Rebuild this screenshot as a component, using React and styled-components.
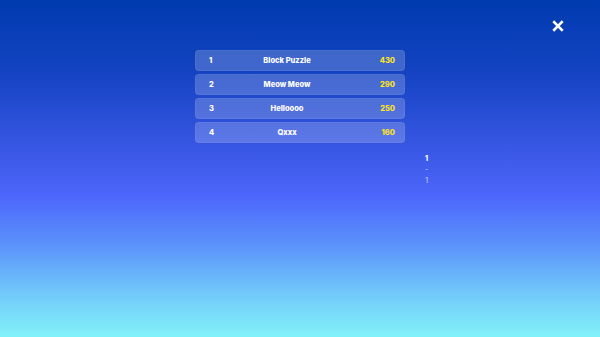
import React from "react";
import styled, { createGlobalStyle } from "styled-components";

const Global = createGlobalStyle`
  html, body { margin: 0; padding: 0; }
  body { font-family: Inter, "Noto Sans", sans-serif; }
  #root { width: 600px; height: 337px; }
`;

const Screen = styled.div`
  position: relative;
  width: 600px;
  height: 337px;
  overflow: hidden;
  background: linear-gradient(to bottom, #003bb0 0%, #1242c0 20%, #3a58e6 45%, #4c66fb 58%, #5a90fb 72%, #72ccf9 88%, #82f2f9 100%);
  display: flex;
  flex-direction: column;
  align-items: center;
  padding-top: 50px;
  box-sizing: border-box;
`;

const CloseButton = styled.button`
  position: absolute;
  top: 20px;
  right: 36px;
  width: 12px;
  height: 12px;
  padding: 0;
  border: none;
  background: none;
  cursor: pointer;
  display: flex;
`;

const Board = styled.div`
  position: relative;
  width: 210px;
  display: flex;
  flex-direction: column;
  gap: 3px;
`;

const Row = styled.div`
  display: grid;
  grid-template-columns: 20px 1fr 50px;
  align-items: center;
  height: 21px;
  padding: 0 10px 0 14px;
  box-sizing: border-box;
  border-radius: 4px;
  background: rgba(255, 255, 255, 0.2);
  box-shadow: inset 0 0 0 1px rgba(255, 255, 255, 0.06);
  color: #ffffff;
  font-size: 7.5px;
  font-weight: 800;
`;

const Rank = styled.span``;

const Name = styled.span`
  text-align: center;
`;

const Score = styled.span`
  text-align: right;
  color: #fbe424;
`;

const Pager = styled.div`
  position: absolute;
  left: calc(100% + 20px);
  top: 104px;
  display: flex;
  flex-direction: column;
  align-items: center;
  gap: 1px;
  font-size: 7px;
  font-weight: 700;
  color: #ffffff;
  line-height: 10px;
`;

const PageNum = styled.span`
  opacity: ${(p) => (p.$dim ? 0.6 : 1)};
  font-weight: ${(p) => (p.$dim ? 500 : 800)};
`;

const rows = [
  { rank: 1, name: "Block Puzzle", score: 430 },
  { rank: 2, name: "Meow Meow", score: 290 },
  { rank: 3, name: "Helloooo", score: 250 },
  { rank: 4, name: "Qxxx", score: 160 },
];

export default function App() {
  return (
    <>
      <Global />
      <Screen>
        <CloseButton aria-label="close">
          <svg width="12" height="12" viewBox="0 0 12 12">
            <path d="M2.2 2.2 L9.8 9.8 M9.8 2.2 L2.2 9.8" stroke="#fff" strokeWidth="2.6" strokeLinecap="square" />
          </svg>
        </CloseButton>
        <Board>
          {rows.map((r) => (
            <Row key={r.rank}>
              <Rank>{r.rank}</Rank>
              <Name>{r.name}</Name>
              <Score>{r.score}</Score>
            </Row>
          ))}
          <Pager>
            <PageNum>1</PageNum>
            <PageNum $dim>-</PageNum>
            <PageNum $dim>1</PageNum>
          </Pager>
        </Board>
      </Screen>
    </>
  );
}
